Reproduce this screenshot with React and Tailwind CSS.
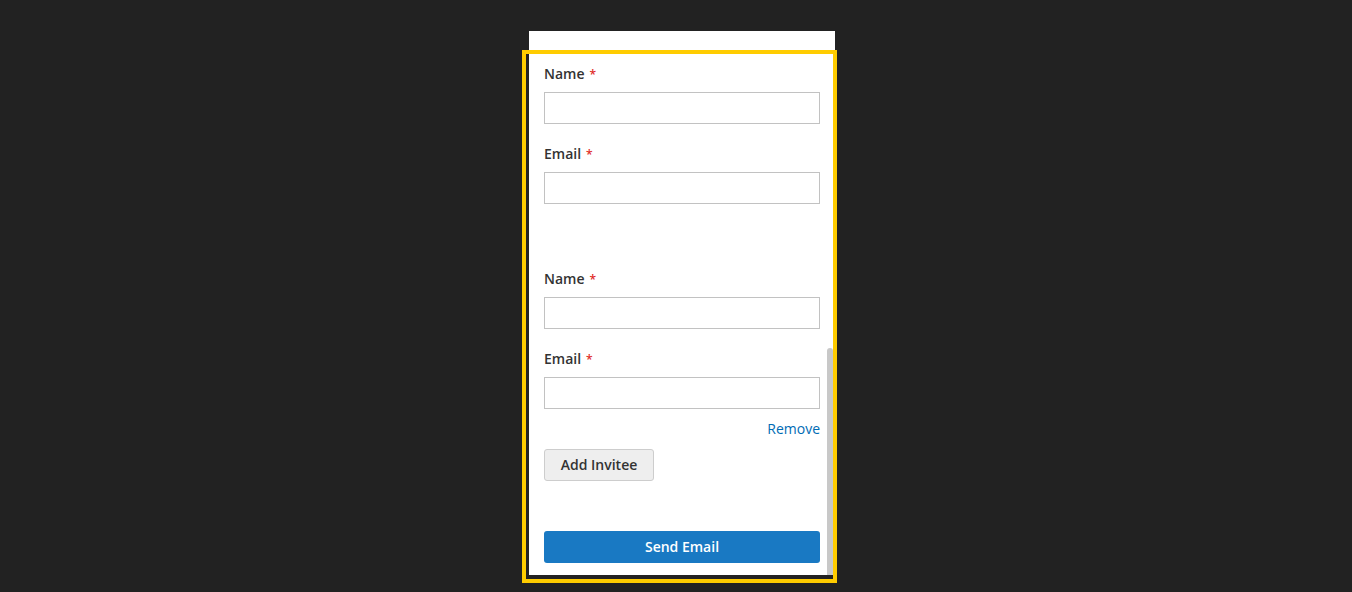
import React from "react";

function Field({ label }) {
  return (
    <div>
      <div className="h-5 leading-5 text-sm font-semibold text-[#333333] mb-2">
        {label}
        <span className="ml-[5px] text-xs text-[#e02b27]">*</span>
      </div>
      <div className="h-8 border border-[#c2c2c2] bg-white"></div>
    </div>
  );
}

export default function App() {
  return (
    <div
      className="relative w-full h-[592px] bg-[#222222] overflow-hidden"
      style={{ fontFamily: '"Open Sans", "Liberation Sans", sans-serif' }}
    >
      <div className="pl-[529px] pt-[31px]">
        <div className="relative w-[306px] h-[544px] bg-white overflow-hidden px-[15px] pt-[33px]">
          <div className="flex flex-col gap-5">
            <Field label="Name" />
            <Field label="Email" />
          </div>
          <div className="flex flex-col gap-5 mt-[65px]">
            <Field label="Name" />
            <Field label="Email" />
          </div>
          <div className="mt-[10px] h-5 leading-5 text-sm text-right text-[#006bb4]">
            Remove
          </div>
          <div className="mt-[10px]">
            <button className="h-8 w-[110px] rounded-[3px] border border-[#cdcdcd] bg-[#eeeeee] text-sm font-semibold text-[#333333]">
              Add Invitee
            </button>
          </div>
          <button className="mt-[50px] h-8 w-full rounded-[3px] bg-[#1979c3] text-sm font-semibold text-white">
            Send Email
          </button>
          <div className="absolute left-[298px] top-[317px] w-[6px] h-[227px] rounded-t-[3px] bg-[#c8c8c8]"></div>
        </div>
      </div>
      <div className="absolute left-[522px] top-[50px] w-[315px] h-[533px] border-4 border-[#ffcc00] pointer-events-none"></div>
    </div>
  );
}
